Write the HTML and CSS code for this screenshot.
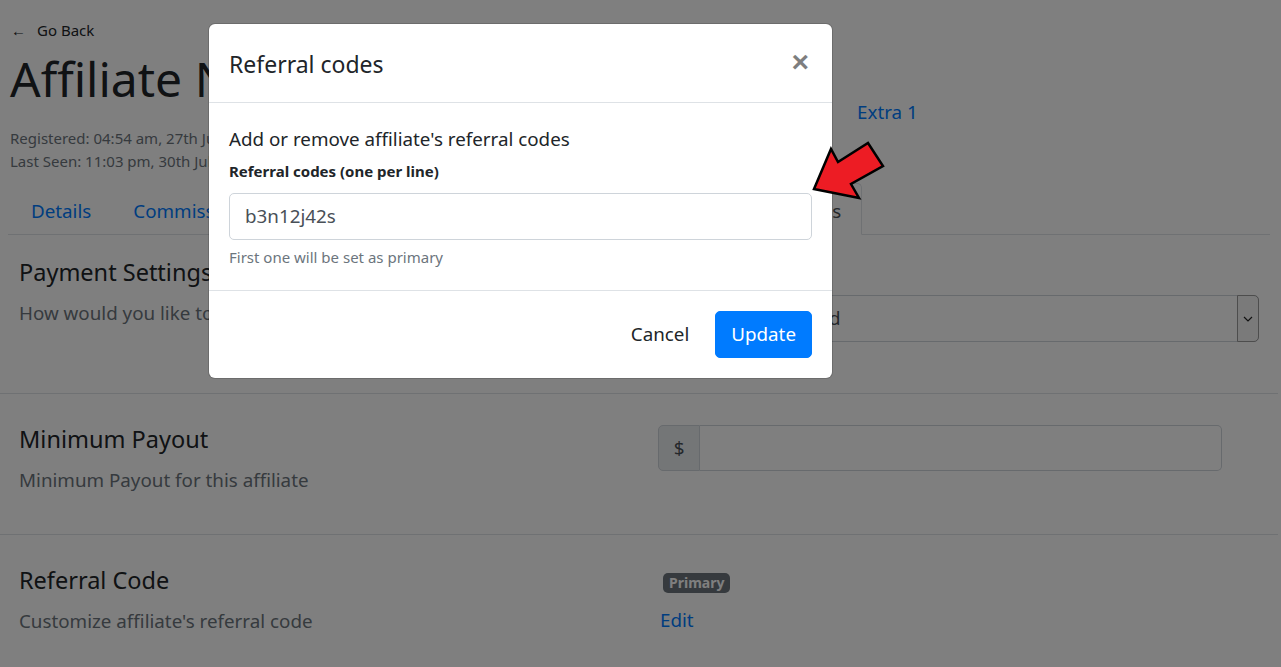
FILE: index.html
```html
<!DOCTYPE html>
<html lang="en">
<head>
<meta charset="utf-8">
<title>Affiliate – Referral codes</title>
<link rel="stylesheet" href="styles.css">
</head>
<body>
<div class="page">
  <div class="top">
    <a class="back" href="#"><span class="back-arrow">&larr;</span>Go Back</a>
    <div class="header">
      <div class="header-main">
        <h1 class="name">Affiliate Name</h1>
        <div class="dates">
          <div>Registered: 04:54 am, 27th July 2020</div>
          <div>Last Seen: 11:03 pm, 30th July 2020</div>
        </div>
      </div>
      <div class="header-links">
        <a href="#">Extra 1</a>
      </div>
    </div>
    <ul class="tabs">
      <li><a class="tab" href="#">Details</a></li>
      <li><a class="tab" href="#">Commissions</a></li>
      <li><a class="tab" href="#">Referrals</a></li>
      <li><a class="tab" href="#">Payouts</a></li>
      <li><a class="tab" href="#">Coupons</a></li>
      <li><a class="tab" href="#">Creatives</a></li>
      <li><a class="tab active" href="#">Settings</a></li>
    </ul>
  </div>

  <div class="settings">
    <div class="row row-first">
      <div class="row-info">
        <h5 class="row-title">Payment Settings</h5>
        <p class="row-desc">How would you like to pay this affiliate</p>
      </div>
      <div class="row-field">
        <div class="form-group">
          <label class="field-label">Payment Method</label>
          <div class="select">
            <span class="select-value">Select your method</span>
            <span class="select-btn">
              <svg width="10" height="6" viewBox="0 0 10 6"><path d="M1 1 L5 5 L9 1" fill="none" stroke="#222" stroke-width="1.2"/></svg>
            </span>
          </div>
        </div>
      </div>
    </div>

    <div class="row">
      <div class="row-info">
        <h5 class="row-title">Minimum Payout</h5>
        <p class="row-desc">Minimum Payout for this affiliate</p>
      </div>
      <div class="row-field">
        <div class="input-group">
          <span class="addon">$</span>
          <span class="input-fill"></span>
        </div>
      </div>
    </div>

    <div class="row">
      <div class="row-info">
        <h5 class="row-title">Referral Code</h5>
        <p class="row-desc">Customize affiliate's referral code</p>
      </div>
      <div class="row-field">
        <div class="code-line"><span class="badge">Primary</span></div>
        <a class="edit-link" href="#">Edit</a>
      </div>
    </div>
  </div>
</div>

<div class="backdrop"></div>

<div class="modal">
  <div class="modal-header">
    <h5 class="modal-title">Referral codes</h5>
    <button class="close" type="button">&times;</button>
  </div>
  <div class="modal-body">
    <p class="intro">Add or remove affiliate's referral codes</p>
    <label class="codes-label">Referral codes (one per line)</label>
    <div class="textarea">b3n12j42s</div>
    <small class="hint">First one will be set as primary</small>
  </div>
  <div class="modal-footer">
    <button class="btn btn-cancel" type="button">Cancel</button>
    <button class="btn btn-primary" type="button">Update</button>
  </div>
</div>

<svg class="pointer" width="100" height="80" viewBox="0 0 100 80">
  <polygon points="14,59 31,19 38,32 68,13 83,36 51,54 59,68" fill="#ed1c24" stroke="#000" stroke-width="2.5" stroke-linejoin="miter"/>
</svg>
</body>
</html>
```

FILE: styles.css
```css
* { box-sizing: border-box; }

html, body {
  margin: 0;
  padding: 0;
}

body {
  font-family: "Noto Sans", "Open Sans", "Liberation Sans", sans-serif;
  font-size: 18.8px;
  line-height: 30px;
  color: #212529;
  background: #fff;
  width: 1281px;
  height: 667px;
  overflow: hidden;
  position: relative;
}

a { color: #007bff; text-decoration: none; }

.top {
  padding: 18px 11px 0 8px;
}

.back {
  display: flex;
  align-items: center;
  font-size: 15px;
  line-height: 24px;
  color: #212529;
  padding-left: 3px;
}

.back-arrow {
  font-size: 15px;
  width: 26px;
}

.header {
  display: grid;
  grid-template-columns: 843px 1fr;
  padding-left: 2px;
}

.name {
  margin: 7px 0 0;
  font-size: 48px;
  font-weight: 400;
  line-height: 60px;
  white-space: nowrap;
}

.dates {
  margin-top: 18px;
  font-size: 15px;
  line-height: 23px;
  color: #6c757d;
}

.header-links {
  padding-top: 55px;
  padding-left: 4px;
  line-height: 30px;
}

.tabs {
  list-style: none;
  margin: 10px 0 0;
  padding: 0 0 0 2px;
  display: flex;
  border-bottom: 1px solid #dee2e6;
}

.tab {
  display: block;
  padding: 12px 20px 8px;
  line-height: 30px;
  border: 1px solid transparent;
  border-radius: 5px 5px 0 0;
  margin-bottom: -1px;
}

.tab.active {
  color: #495057;
  background: #fff;
  border-color: #dee2e6 #dee2e6 #fff;
}

.row {
  display: grid;
  grid-template-columns: 639px 1fr;
  padding: 31px 19px 30px 19px;
  border-bottom: 1px solid #dee2e6;
  width: 1278px;
}

.row-first {
  padding-top: 23px;
}

.row-title {
  margin: 0 0 12px;
  font-size: 23.5px;
  font-weight: 400;
  line-height: 28px;
}

.row-desc {
  margin: 0 0 9px;
  color: #6c757d;
}

.form-group { margin-bottom: 21px; }

.field-label {
  display: block;
  margin-bottom: 7px;
}

.select {
  display: flex;
  align-items: stretch;
  height: 47px;
  border: 1px solid #ced4da;
  border-radius: 5px;
  background: #fff;
}

.select-value {
  flex: 1;
  padding: 7px 10px;
  color: #495057;
  white-space: nowrap;
}

.select-btn {
  width: 22px;
  display: flex;
  align-items: center;
  justify-content: center;
  background: #f4f4f4;
  border: 1px solid #9a9a9a;
  margin: -1px -1px -1px 0;
  border-radius: 0 5px 5px 0;
}

.input-group {
  display: flex;
  width: 564px;
  height: 46px;
}

.addon {
  width: 42px;
  display: flex;
  align-items: center;
  justify-content: center;
  background: #e9ecef;
  border: 1px solid #ced4da;
  border-radius: 5px 0 0 5px;
  color: #495057;
}

.input-fill {
  flex: 1;
  border: 1px solid #ced4da;
  border-left: 0;
  border-radius: 0 5px 5px 0;
  background: #fff;
}

.code-line {
  height: 33px;
  display: flex;
  align-items: center;
  padding-left: 5px;
}

.badge {
  display: inline-block;
  background: #6c757d;
  color: #fff;
  font-size: 14px;
  font-weight: 700;
  line-height: 14px;
  padding: 3px 6px;
  border-radius: 5px;
}

.edit-link {
  display: block;
  line-height: 30px;
  margin-top: 6px;
  padding-left: 2px;
}

.backdrop {
  position: absolute;
  inset: 0;
  background: rgba(0, 0, 0, 0.5);
}

.modal {
  position: absolute;
  left: 209px;
  top: 24px;
  width: 623px;
  background: #fff;
  border-radius: 6px;
  box-shadow: 0 0 0 1px rgba(0, 0, 0, 0.15);
}

.modal-header {
  display: flex;
  align-items: flex-start;
  justify-content: space-between;
  padding: 22px 20px 18px;
  border-bottom: 1px solid #dee2e6;
}

.modal-title {
  margin: 0;
  font-size: 23px;
  font-weight: 400;
  line-height: 37.5px;
}

.close {
  padding: 20px 23px 20px 20px;
  margin: -19px -20px -20px auto;
  background: transparent;
  border: 0;
  font-family: "Liberation Sans", Arial, sans-serif;
  font-size: 30px;
  font-weight: 700;
  line-height: 30px;
  color: #000;
  opacity: 0.5;
  cursor: pointer;
}

.modal-body {
  padding: 21px 20px 21px;
}

.intro {
  margin: 0 0 5px;
  line-height: 30px;
}

.codes-label {
  display: block;
  font-size: 15px;
  font-weight: 700;
  line-height: 24px;
  margin-bottom: 10px;
}

.textarea {
  height: 47px;
  padding: 7px 15px;
  border: 1px solid #ced4da;
  border-radius: 5px;
  color: #495057;
  line-height: 30px;
}

.hint {
  display: block;
  margin-top: 5px;
  font-size: 15px;
  line-height: 24px;
  color: #6c757d;
}

.modal-footer {
  display: flex;
  justify-content: flex-end;
  align-items: center;
  padding: 15px;
  border-top: 1px solid #dee2e6;
}

.btn {
  margin: 5px;
  font-family: inherit;
  font-size: 18.8px;
  line-height: 30px;
  padding: 7.5px 15px;
  border: 1px solid transparent;
  border-radius: 5px;
  background: transparent;
  color: #212529;
  cursor: pointer;
}

.btn-primary {
  background: #007bff;
  border-color: #007bff;
  color: #fff;
}

.pointer {
  position: absolute;
  left: 800px;
  top: 130px;
}
```
